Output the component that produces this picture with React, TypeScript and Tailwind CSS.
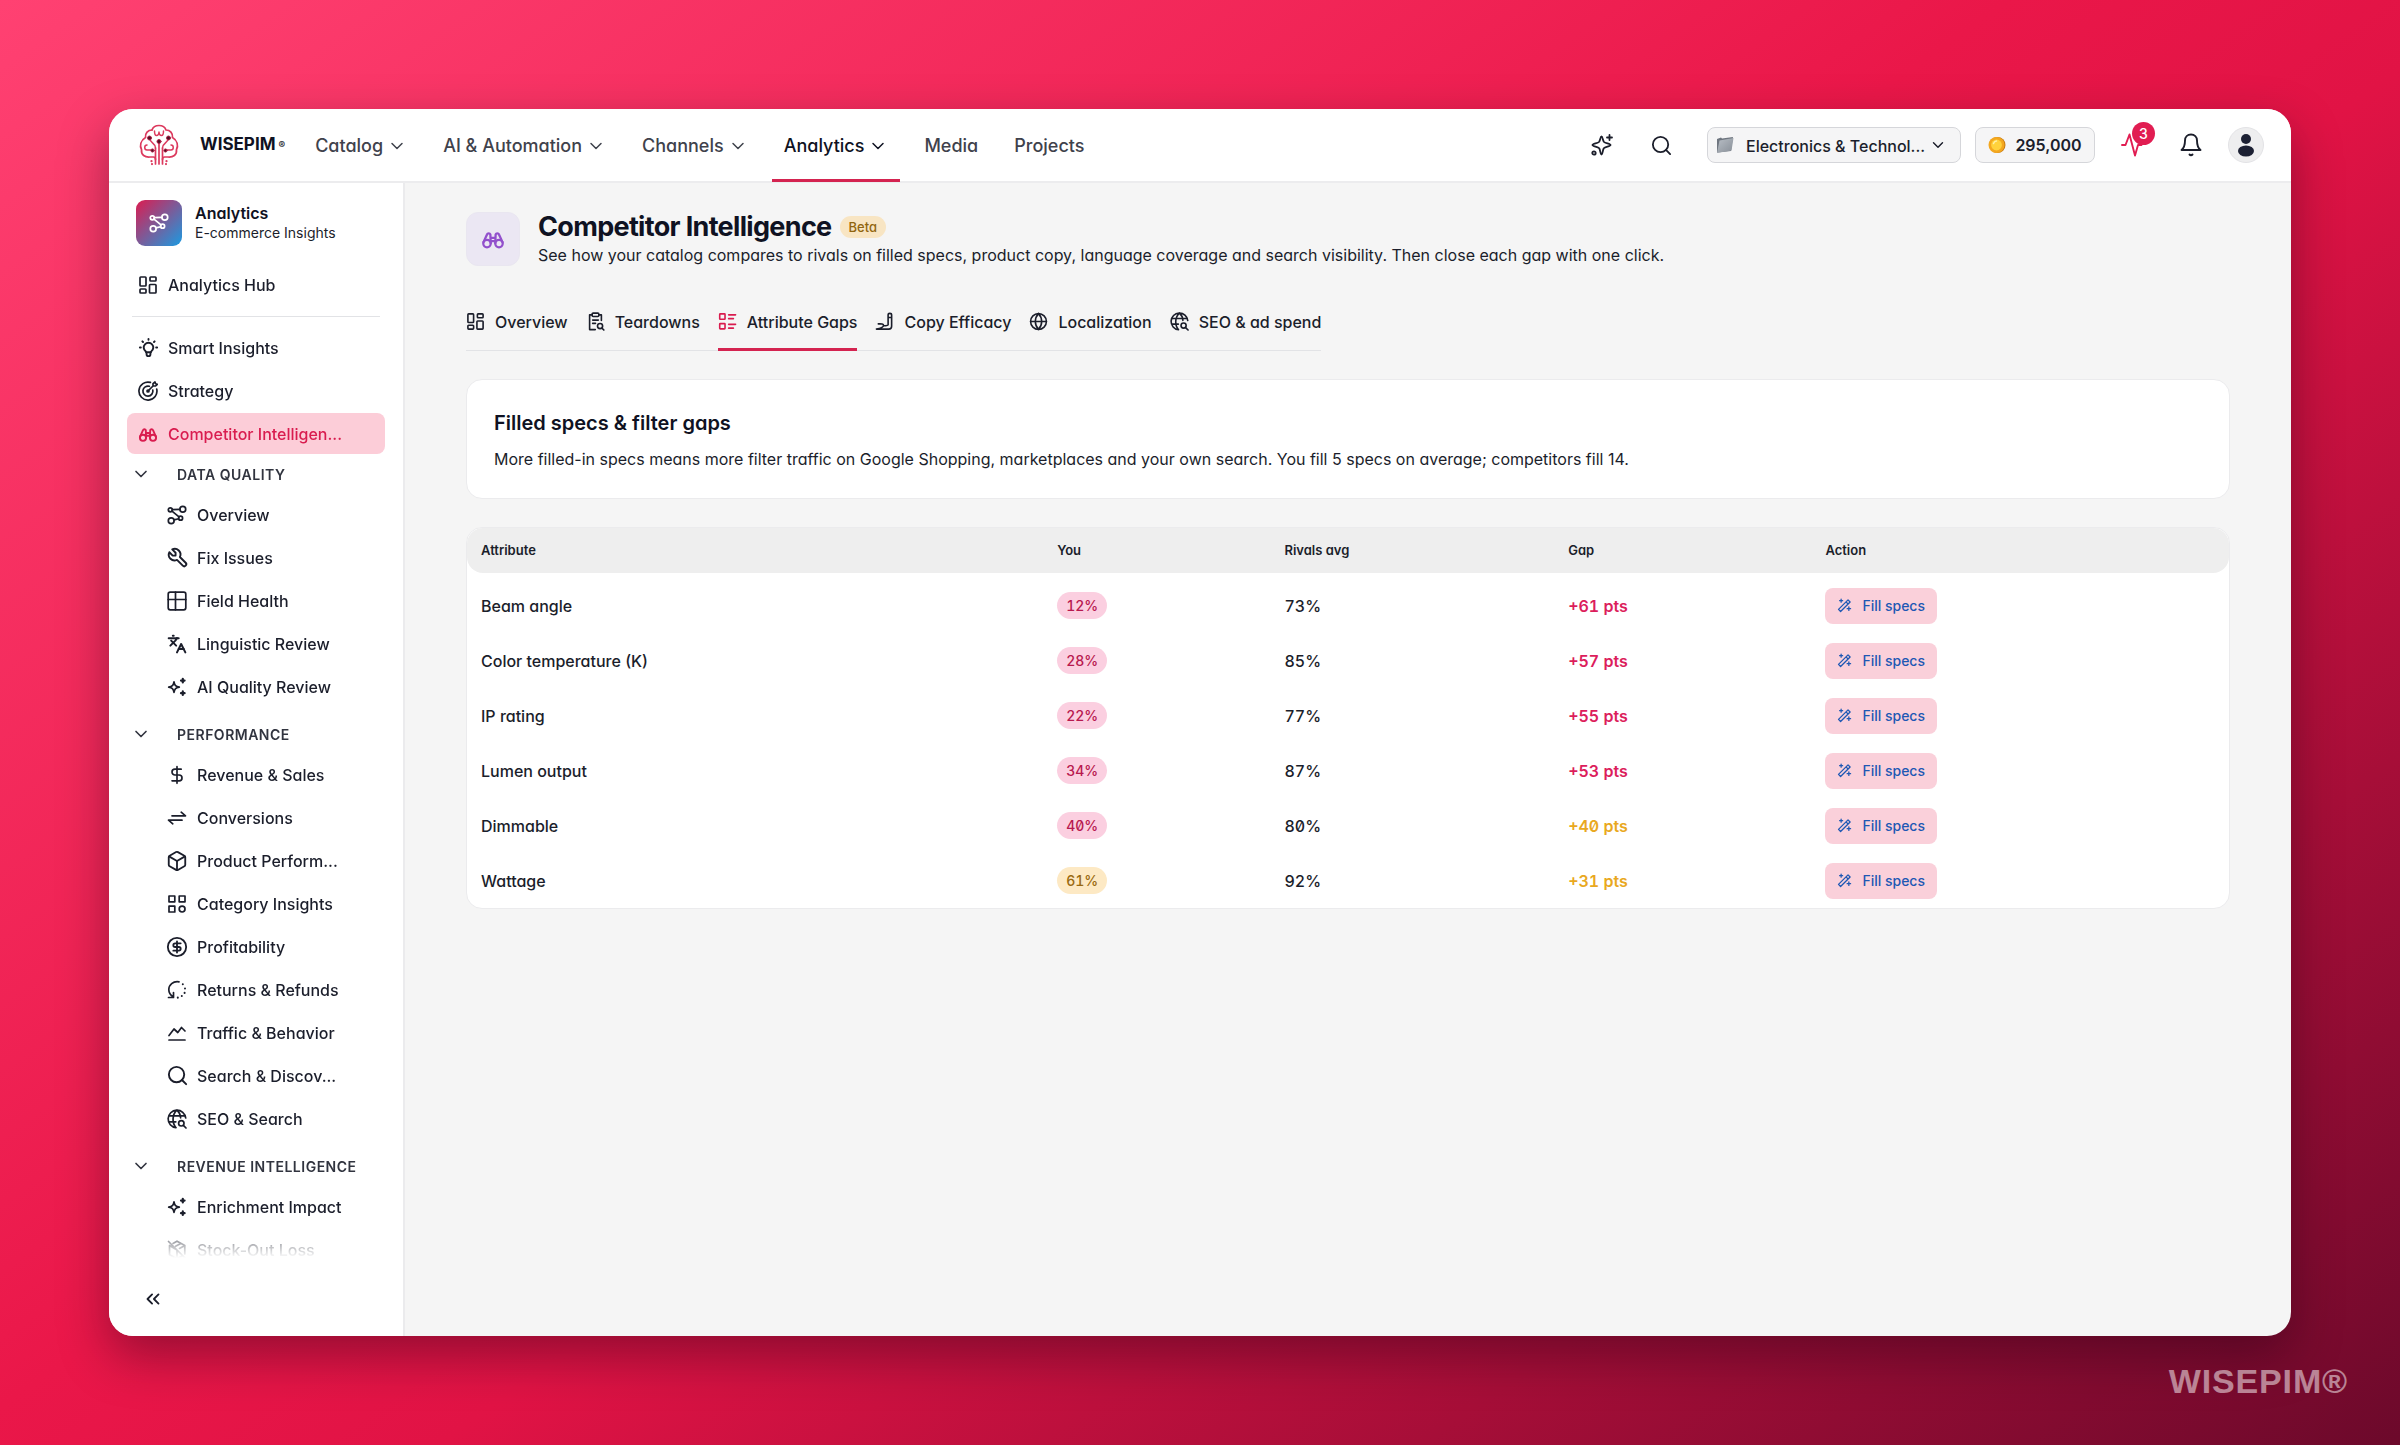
import React, { useState } from 'react';
import {
  Box,
  ChevronDown,
  ChevronsLeft,
  CircleDollarSign,
  DollarSign,
  Globe,
  Languages,
  Search,
} from 'lucide-react';
import { TbTool, TbBulb } from 'react-icons/tb';

type IconProps = { size?: number; className?: string };

const Svg: React.FC<IconProps & { children: React.ReactNode; width?: number }> = ({ size = 20, className, children, width = 1.7 }) => (
  <svg
    width={size}
    height={size}
    viewBox="0 0 20 20"
    fill="none"
    stroke="currentColor"
    strokeWidth={width}
    strokeLinecap="round"
    strokeLinejoin="round"
    className={className}
    aria-hidden="true"
  >
    {children}
  </svg>
);

const DashboardIcon = (p: IconProps) => (
  <Svg {...p}>
    <rect x="2" y="2" width="6" height="9" rx="0.8" />
    <rect x="12" y="2" width="6" height="4" rx="0.8" />
    <rect x="2" y="14" width="6" height="4" rx="0.8" />
    <rect x="11.5" y="9.5" width="6.5" height="8.5" rx="0.8" />
  </Svg>
);

const NetworkIcon = (p: IconProps) => (
  <Svg {...p}>
    <circle cx="3.3" cy="4.8" r="2" />
    <circle cx="15.8" cy="4.2" r="2.9" />
    <circle cx="4.2" cy="15.8" r="2.9" />
    <circle cx="13.6" cy="13.2" r="2" />
    <path d="M5.3 4.6l7.6-.3M5 6.1l7 5.8M7 14.9l4.7-1.2" />
  </Svg>
);

const TargetIcon = (p: IconProps) => (
  <Svg {...p}>
    <path d="M12.4 1.4A9 9 0 1 0 18.7 8" />
    <path d="M11.4 5.3A5 5 0 1 0 14.8 9" />
    <path d="M10 10l5-5M15 5V2.6l2-1.6.6 1.8 1.7.5L17.6 5H15z" />
    <circle cx="10" cy="10" r="1" fill="currentColor" />
  </Svg>
);

const BinocularsIcon = (p: IconProps) => (
  <Svg {...p} width={1.9}>
    <circle cx="5" cy="13.8" r="3.1" />
    <circle cx="15" cy="13.8" r="3.1" />
    <path d="M2.1 12.6L5 6.200c.5-1.300 2.300-1.300 2.800 0l.3 7.300M17.900 12.600L15 6.200c-.5-1.300-2.300-1.300-2.800 0l-.3 7.300M8 9h4M8 11.800h4" />
  </Svg>
);

const TableIcon = (p: IconProps) => (
  <Svg {...p}>
    <rect x="1.2" y="1.2" width="17.6" height="17.6" rx="2" />
    <path d="M8.500 1.200v17.600M1.200 8.500h17.600" />
  </Svg>
);

const LanguageIcon = ({ size, className }: IconProps) => <Languages size={size} strokeWidth={2.4} className={className} />;

const SparklesIcon = (p: IconProps) => (
  <Svg {...p}>
    <path d="M7 4.800c.7 3.600 1.700 4.600 5.300 5.300-3.600.7-4.600 1.700-5.300 5.300-.7-3.600-1.700-4.600-5.300-5.300 3.600-.7 4.600-1.700 5.300-5.300z" />
    <path d="M15.800 1.800v3.600M14 3.600h3.600M15.800 14.400V18M14 16.200h3.600" strokeWidth="2.200" />
  </Svg>
);

const ConvertIcon = (p: IconProps) => (
  <Svg {...p}>
    <path d="M5 7.800h13.500l-4.300-3.600M15 12.200H1.500l4.300 3.600" />
  </Svg>
);

const CategoryIcon = (p: IconProps) => (
  <Svg {...p}>
    <rect x="2" y="2" width="5.800" height="5.800" />
    <rect x="12.200" y="2" width="5.800" height="5.800" />
    <rect x="2" y="12.200" width="5.800" height="5.800" />
    <circle cx="15.100" cy="15.100" r="2.900" />
  </Svg>
);

const ReturnsIcon = (p: IconProps) => (
  <Svg {...p}>
    <path d="M12 1.800C6 .8 1.800 5 1.800 9.500c0 3 1.600 5.600 4.400 7.300M1.500 17.500h5v-5" />
    <path d="M15.800 4.200v.1M18 8.500v.1M17.600 12.800v.1M14.800 16v.1M10.800 17.600v.1" strokeWidth="2" />
  </Svg>
);

const TrafficIcon = (p: IconProps) => (
  <Svg {...p}>
    <path d="M2 12.500l5-6.500 3.800 3.500L14.500 4.500 18 8M2 17h16" />
  </Svg>
);

const GlobeSearchIcon = (p: IconProps) => (
  <Svg {...p}>
    <path d="M18.700 9A8.800 8.800 0 1 0 9 18.700M9 18.700C4.800 14 5 5.500 10 1.200c2.300 2.200 3.500 4.800 3.600 7.600M1.800 6.800h16.400M1.800 12.800h7" />
    <circle cx="14.300" cy="14.300" r="2.700" />
    <path d="M16.400 16.400l2.600 2.600" />
  </Svg>
);

const BoxOffIcon = (p: IconProps) => (
  <Svg {...p}>
    <path d="M1.500 1.500l17 17M2.500 5.500v9.300L10 18.800l5.500-3M10 10v8.800M2.500 5.500L10 10M6 3.400l4-2.200 7.800 4.300v8.500M17.500 5.700L12.500 8.400M13.800 3.500L8.600 6.300" />
  </Svg>
);

const ClipboardIcon = (p: IconProps) => (
  <Svg {...p}>
    <path d="M6.500 3H3.800v15.500h6M13.500 3h2.700v6" />
    <rect x="6.500" y="1.200" width="7" height="3.600" rx="1" />
    <path d="M7 8.500h6M7 12h3M17 17.200l1.800 1.800" />
    <circle cx="14.800" cy="14.800" r="2.700" />
  </Svg>
);

const ListIcon = (p: IconProps) => (
  <Svg {...p}>
    <rect x="1.800" y="2" width="5.600" height="5.600" rx=".6" />
    <rect x="1.800" y="12.200" width="5.600" height="5.600" rx=".6" />
    <path d="M11.200 3h7.300M11.200 7h5M11.200 13h7.300M11.200 17h5" />
  </Svg>
);

const CopyIcon = (p: IconProps) => (
  <Svg {...p}>
    <path d="M13.800 3.200c0-2.300 3.700-2.300 3.700 0V15c0 1.800-1.200 3-3 3H1.500c3.500-.6 7.500-1.800 7.500-4 0-1.400-2-1.700-5.500-1.500M9 14.500c2.500 0 4.800-.3 4.800-1V3.200M13.800 5.800h3.700" />
  </Svg>
);

const WandIcon = (p: IconProps) => (
  <Svg {...p}>
    <path d="M2 15.200L14.700 2.500l2.800 2.800L4.800 18zM12 5.200L14.800 8M5.500 1.500v4M3.500 3.500h4M15.800 12v4.600M13.500 14.300h4.600" />
  </Svg>
);

const AiSparkIcon = () => (
  <svg width="24" height="24" viewBox="0 0 24 24" fill="none" stroke="currentColor" strokeWidth="1.800" strokeLinecap="round" strokeLinejoin="round" aria-hidden="true">
    <path d="M11.500 3.500c1.100 0 1.200 3.500 2.300 5.200 1.300 1.600 6.700 1.900 6.700 3.300s-5.400 1.700-6.700 3.300c-1.100 1.700-1.200 6.200-2.300 6.200s-1.200-4.500-2.300-6.200C7.900 13.700 2.500 13.400 2.500 12s5.400-1.700 6.700-3.300c1.100-1.700 1.200-5.200 2.300-5.200z" />
    <path d="M19.500 2v5M17 4.500h5" />
    <circle cx="4" cy="20" r="1.700" />
  </svg>
);

const BrainLogo = () => (
  <svg width="42" height="42" viewBox="0 0 42 42" fill="none" stroke="#dc3a5e" strokeWidth="1.700" strokeLinecap="round" aria-hidden="true">
    <path d="M14 6C16 0 26 0 28 6c4 0 7 3 6.500 7.500 5 3 6 8 4 12C39 31 35 33.500 30 33h-3.500c-1.500 0-2 1-2 2.500" />
    <path d="M14 6c-4 0-7 3-6.500 7.500-5 3-6 8-4 12C3 31 7 33.500 12 33h3.500c1.500 0 2 1 2 2.500" />
    <path d="M21 18v22M17.500 24v16M24.500 24v16" />
    <path d="M16.500 7c0 3 .5 4.500 2 4.500s2.500-1.500 2.500-4c0 2.500 1 4 2.500 4s2-1.500 2-4.500" strokeWidth="1.500" />
    <path d="M12 15c0 4 5.500 4 5.500 9M30 15c0 4-5.500 4-5.500 9M14 26H9c-3 0-3-5 0-5M28 26h5c3 0 3-5 0-5" strokeWidth="1.500" />
    <g fill="#4a1022" stroke="#b3234a" strokeWidth="1">
      <circle cx="11.500" cy="14" r="2" />
      <circle cx="30.500" cy="14" r="2" />
      <circle cx="21" cy="17.500" r="2" />
      <circle cx="14.500" cy="26.500" r="1.600" />
      <circle cx="27.500" cy="26.500" r="1.600" />
    </g>
    <path d="M13.500 37v.2M28.500 37v.2M14 40v.1M28 40v.1" strokeWidth="2.200" />
  </svg>
);

const FolderIcon = () => (
  <svg width="18" height="20" viewBox="0 0 18 20" aria-hidden="true">
    <defs>
      <linearGradient id="folder" x1="0" y1="0" x2="1" y2="1">
        <stop offset="0" stopColor="#b9bfc6" />
        <stop offset="1" stopColor="#878e97" />
      </linearGradient>
    </defs>
    <path d="M1 4l4-1.500 1 1L17 2l-2 14L1 17.500z" fill="#6f7680" />
    <path d="M3.500 5.500L17.500 3 15.500 15.500 1 18z" fill="url(#folder)" />
  </svg>
);

const CoinIcon = () => (
  <svg width="18" height="18" viewBox="0 0 18 18" aria-hidden="true">
    <circle cx="9.500" cy="9" r="8" fill="#c67a12" />
    <circle cx="8.500" cy="9" r="8" fill="#f3a71f" />
    <circle cx="8.500" cy="9" r="5.400" fill="#ffd23c" />
    <path d="M5.500 7.500a3.600 3.600 0 0 1 3-2.500" stroke="#fff0a8" strokeWidth="1.500" fill="none" strokeLinecap="round" />
  </svg>
);

const PulseIcon = () => (
  <svg width="22" height="34" viewBox="0 0 22 34" fill="none" stroke="#e11d52" strokeWidth="1.900" strokeLinecap="round" strokeLinejoin="round" aria-hidden="true">
    <path d="M1 17h3.500L8.500 6.500l5.500 21L17 17h3.500" />
  </svg>
);

const BellIcon = () => (
  <svg width="24" height="24" viewBox="0 0 24 24" fill="none" stroke="currentColor" strokeWidth="1.900" strokeLinecap="round" strokeLinejoin="round" aria-hidden="true">
    <path d="M12 1.500C8.500 1.500 6 4 6 7.500c0 5-1 7.500-3.500 9.500h19C19 15 18 12.500 18 7.500 18 4 15.500 1.500 12 1.500z" />
    <path d="M10.500 21.500c.8.900 2.200.9 3 0" />
  </svg>
);

const NAV = [
  { label: 'Catalog', menu: true },
  { label: 'AI & Automation', menu: true },
  { label: 'Channels', menu: true },
  { label: 'Analytics', menu: true, active: true },
  { label: 'Media' },
  { label: 'Projects' },
];

const TOP_LINKS = [
  { label: 'Smart Insights', icon: TbBulb, size: 23 },
  { label: 'Strategy', icon: TargetIcon },
  { label: 'Competitor Intelligen...', icon: BinocularsIcon, active: true },
];

const SECTIONS = [
  {
    title: 'DATA QUALITY',
    items: [
      { label: 'Overview', icon: NetworkIcon },
      { label: 'Fix Issues', icon: TbTool, size: 23 },
      { label: 'Field Health', icon: TableIcon },
      { label: 'Linguistic Review', icon: LanguageIcon },
      { label: 'AI Quality Review', icon: SparklesIcon },
    ],
  },
  {
    title: 'PERFORMANCE',
    items: [
      { label: 'Revenue & Sales', icon: DollarSign },
      { label: 'Conversions', icon: ConvertIcon },
      { label: 'Product Perform...', icon: Box, size: 22 },
      { label: 'Category Insights', icon: CategoryIcon },
      { label: 'Profitability', icon: CircleDollarSign, size: 22 },
      { label: 'Returns & Refunds', icon: ReturnsIcon },
      { label: 'Traffic & Behavior', icon: TrafficIcon },
      { label: 'Search & Discov...', icon: Search, size: 23 },
      { label: 'SEO & Search', icon: GlobeSearchIcon },
    ],
  },
  {
    title: 'REVENUE INTELLIGENCE',
    items: [
      { label: 'Enrichment Impact', icon: SparklesIcon },
      { label: 'Stock-Out Loss', icon: BoxOffIcon },
    ],
  },
];

const TABS = [
  { label: 'Overview', icon: DashboardIcon },
  { label: 'Teardowns', icon: ClipboardIcon },
  { label: 'Attribute Gaps', icon: ListIcon },
  { label: 'Copy Efficacy', icon: CopyIcon },
  { label: 'Localization', icon: Globe },
  { label: 'SEO & ad spend', icon: GlobeSearchIcon },
];

const ROWS = [
  { name: 'Beam angle', you: 12, rivals: 73, gap: 61 },
  { name: 'Color temperature (K)', you: 28, rivals: 85, gap: 57 },
  { name: 'IP rating', you: 22, rivals: 77, gap: 55 },
  { name: 'Lumen output', you: 34, rivals: 87, gap: 53 },
  { name: 'Dimmable', you: 40, rivals: 80, gap: 40 },
  { name: 'Wattage', you: 61, rivals: 92, gap: 31 },
];

// Keeps labels aligned even when a glyph is drawn larger than its slot
const IconSlot: React.FC<{ icon: any; size?: number }> = ({ icon: Icon, size = 20 }) => (
  <span className="flex h-5 w-5 shrink-0 items-center justify-center">
    <Icon size={size} className="shrink-0" />
  </span>
);

const Header: React.FC = () => (
  <header className="flex h-[74px] shrink-0 items-center border-b-2 border-[#ececee] bg-white pl-[29px] pr-[27px]">
    <a href="#" className="flex items-center">
      <BrainLogo />
      <span className="ml-5 text-[17px] font-bold text-[#0f1222]">WISEPIM</span>
      <span className="ml-[3px] text-[10px] font-bold">®</span>
    </a>

    <nav className="ml-[18px] flex gap-3 self-stretch">
      {NAV.map(({ label, menu, active }) => (
        <button
          key={label}
          className={`flex h-[73px] items-center gap-1 px-3 text-[18px] font-medium ${active ? 'border-b-3 border-[#d42350] pt-[3px] text-[#0f1222]' : 'text-[#3f424c]'}`}
        >
          {label}
          {menu && <ChevronDown size={20} strokeWidth={1.8} />}
        </button>
      ))}
    </nav>

    <div className="ml-auto flex items-center">
      <button aria-label="Assistant" className="mr-9"><AiSparkIcon /></button>
      <button aria-label="Search" className="mr-[34px]"><Search size={23} strokeWidth={1.9} /></button>

      <div className="relative mr-[14px]">
        <span className="pointer-events-none absolute left-[9px] top-2"><FolderIcon /></span>
        <select
          aria-label="Catalog"
          className="h-9 w-[254px] appearance-none rounded-lg border border-[#d5d6da] bg-[#f5f5f6] pt-px pl-[38px] pr-8 text-[16px] font-medium outline-none"
        >
          <option>Electronics &amp; Technol...</option>
        </select>
        <ChevronDown size={18} strokeWidth={1.9} className="pointer-events-none absolute right-[14px] top-[9px]" />
      </div>

      <button className="mr-[26px] flex h-9 w-[120px] items-center justify-center gap-[9px] rounded-lg border border-[#d5d6da] bg-[#f5f5f6] text-[16px] font-semibold">
        <CoinIcon />
        295,000
      </button>

      <button aria-label="Activity" className="relative mr-9">
        <PulseIcon />
        <span className="absolute -top-[6px] left-[11px] flex h-[23px] w-[23px] items-center justify-center rounded-full bg-[#e11d52] text-[14px] font-medium text-white">3</span>
      </button>
      <button aria-label="Notifications" className="mr-[25px]"><BellIcon /></button>
      <button aria-label="Account" className="flex h-9 w-9 items-center justify-center rounded-full border border-[#e3e3e6] bg-[#eeeeef]">
        <svg width="18" height="24" viewBox="0 0 18 24" fill="#1c2033" aria-hidden="true">
          <circle cx="9" cy="6" r="5" />
          <ellipse cx="9" cy="18" rx="8" ry="5.500" />
        </svg>
      </button>
    </div>
  </header>
);

const Sidebar: React.FC = () => {
  const [closed, setClosed] = useState<string[]>([]);

  const toggle = (title: string) => {
    setClosed(closed.includes(title) ? closed.filter((t) => t !== title) : [...closed, title]);
  };

  return (
    <aside className="flex w-[296px] shrink-0 flex-col border-r-2 border-[#ebebed] bg-white">
      <div className="flex items-center gap-[13px] px-[27px] pt-[17px]">
        <span className="flex h-[46px] w-[46px] items-center justify-center rounded-[9px] bg-linear-to-br/srgb from-[#dc1c50] to-[#1a9be2] text-white">
          <NetworkIcon size={20} />
        </span>
        <div>
          <p className="text-[16px] leading-5 font-semibold text-[#0f1222]">Analytics</p>
          <p className="text-[14px] leading-5">E-commerce Insights</p>
        </div>
      </div>

      <nav className="mt-[18px] flex-1 overflow-y-auto px-[18px] [mask-image:linear-gradient(to_bottom,black_calc(100%-44px),transparent_calc(100%-4px))] [scrollbar-width:none]">
        <a href="#" className="flex h-[41px] items-center gap-[10px] px-[11px] text-[16px] font-medium">
          <IconSlot icon={DashboardIcon} />
          Analytics Hub
        </a>
        <hr className="mx-[5px] mt-[11px] mb-[10px] border-[#e2e3e6]" />

        <div className="flex flex-col gap-[2px]">
          {TOP_LINKS.map(({ label, icon, size, active }) => (
            <a
              key={label}
              href="#"
              className={`flex h-[41px] items-center gap-[10px] rounded-lg px-[11px] text-[16px] font-medium ${active ? 'bg-[#fccdd8] text-[#d91c4f]' : ''}`}
            >
              <IconSlot icon={icon} size={size} />
              {label}
            </a>
          ))}
        </div>

        {SECTIONS.map(({ title, items }) => (
          <div key={title} className="mb-[7px]">
            <button onClick={() => toggle(title)} className="flex h-10 w-full items-center gap-[26px] px-1 text-[14px] font-semibold tracking-[0.5px] text-[#31343f]">
              <ChevronDown size={20} strokeWidth={2} />
              {title}
            </button>
            {!closed.includes(title) && (
              <div className="flex flex-col gap-[2px]">
                {items.map(({ label, icon, size }: { label: string; icon: any; size?: number }) => (
                  <a key={label} href="#" className="flex h-[41px] items-center gap-[10px] pl-10 text-[16px] font-medium">
                    <IconSlot icon={icon} size={size} />
                    {label}
                  </a>
                ))}
              </div>
            )}
          </div>
        ))}
      </nav>

      <div className="flex h-[74px] shrink-0 items-center pl-[33px]">
        <button aria-label="Collapse sidebar"><ChevronsLeft size={22} /></button>
      </div>
    </aside>
  );
};

const App: React.FC = () => {
  const [tab, setTab] = useState('Attribute Gaps');

  return (
    <div className="relative flex h-screen flex-col bg-[linear-gradient(145deg,#ff4172_0%,#ea1749_45%,#e11345_56%,#6c092b_100%)] p-[109px] font-['Inter',sans-serif] text-[#1b1e2b] [font-feature-settings:'cv11']">
      <div className="flex min-h-0 flex-1 flex-col overflow-hidden rounded-[24px] bg-[#f5f5f5] shadow-[0_20px_50px_rgba(30,0,20,0.4)]">
        <Header />

        <div className="flex min-h-0 flex-1">
          <Sidebar />

          <main className="flex-1 overflow-y-auto px-[61px] pt-[28px]">
            <div className="flex items-center gap-[18px]">
              <span className="flex h-[54px] w-[54px] items-center justify-center rounded-xl border border-[#e9e6f0] bg-[#ebe7f3] text-[#9250cc]">
                <BinocularsIcon size={24} />
              </span>
              <div>
                <div className="flex items-center gap-2">
                  <h1 className="text-[27px] leading-8 font-bold tracking-tight text-[#0f1222]">Competitor Intelligence</h1>
                  <span className="rounded-full bg-[#f8e5c3] px-[9px] text-[13px] leading-[22px] font-medium text-[#91650f]">Beta</span>
                </div>
                <p className="text-[16px] leading-6">
                  See how your catalog compares to rivals on filled specs, product copy, language coverage and search visibility. Then close each gap with one click.
                </p>
              </div>
            </div>

            <div role="tablist" className="mt-7 flex w-fit gap-[18px] border-b border-[#e2e3e6]">
              {TABS.map(({ label, icon: Icon }) => (
                <button
                  key={label}
                  role="tab"
                  aria-selected={tab === label}
                  onClick={() => setTab(label)}
                  className={`-mb-px flex h-[56px] items-center gap-[10px] border-b-3 text-[16px] font-medium ${tab === label ? 'border-[#d42350]' : 'border-transparent'}`}
                >
                  <span className={tab === label ? 'text-[#d91c4f]' : ''}><Icon size={19} /></span>
                  {label}
                </button>
              ))}
            </div>

            <section className="mt-7 rounded-2xl border border-[#ebebed] bg-white px-[27px] py-[27px]">
              <h2 className="text-[20px] leading-8 font-semibold text-[#0f1222]">Filled specs &amp; filter gaps</h2>
              <p className="mt-2 text-[16px] leading-6">
                More filled-in specs means more filter traffic on Google Shopping, marketplaces and your own search. You fill 5 specs on average; competitors fill 14.
              </p>
            </section>

            <div className="mt-7 rounded-2xl border border-[#ebebed] bg-white">
              <table className="w-full table-fixed border-separate border-spacing-0 text-left">
                <thead className="text-[13px] font-semibold">
                  <tr className="h-[45px] *:bg-[#eeeeee] *:px-[14px] *:font-semibold">
                    <th className="w-[32.7%] rounded-l-2xl">Attribute</th>
                    <th className="w-[12.9%]">You</th>
                    <th className="w-[16.1%]">Rivals avg</th>
                    <th className="w-[14.6%]">Gap</th>
                    <th className="w-[23.7%] rounded-r-2xl">Action</th>
                  </tr>
                </thead>
                <tbody className="text-[16px] font-medium">
                  {ROWS.map((row, i) => (
                    <tr key={row.name} className={`*:px-[14px] ${i === 0 ? 'h-[60px] *:pt-[5px]' : 'h-[55px]'}`}>
                      <td>{row.name}</td>
                      <td>
                        <span className={`inline-flex h-[27px] items-center rounded-full px-[9px] text-[14px] tabular-nums slashed-zero ${row.you > 50 ? 'bg-[#fde9c4] text-[#9a6a10]' : 'bg-[#fbcfe0] text-[#b8194f]'}`}>
                          {row.you}%
                        </span>
                      </td>
                      <td className="tabular-nums slashed-zero">{row.rivals}%</td>
                      <td className={`font-semibold tabular-nums slashed-zero ${row.gap > 50 ? 'text-[#dc1d5c]' : 'text-[#e9a820]'}`}>+{row.gap} pts</td>
                      <td>
                        <button className="flex h-9 items-center gap-[10px] rounded-lg bg-[#fad0da] px-3 text-[14px] font-medium text-[#1e58b4]">
                          <WandIcon size={15} />
                          Fill specs
                        </button>
                      </td>
                    </tr>
                  ))}
                </tbody>
              </table>
            </div>
          </main>
        </div>
      </div>

      <span className="absolute right-[52px] bottom-[44px] font-['Liberation_Sans',sans-serif] text-[34px] leading-[40px] font-bold tracking-wide text-white/50">WISEPIM®</span>
    </div>
  );
};

export default App;
